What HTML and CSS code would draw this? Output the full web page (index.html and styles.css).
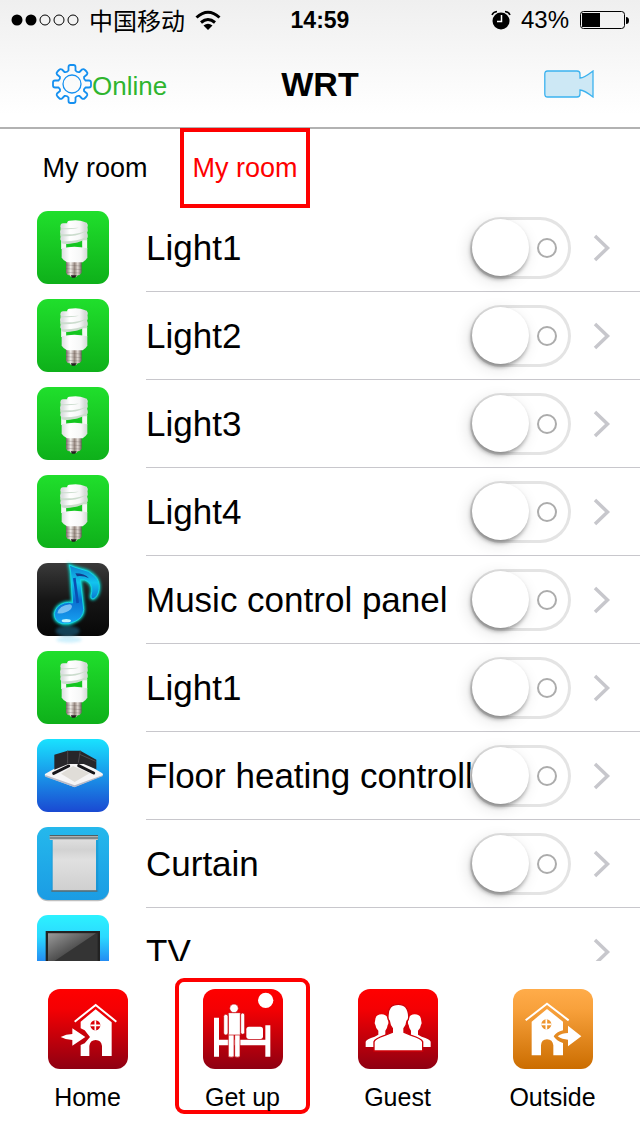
FILE: index.html
```html
<!DOCTYPE html>
<html lang="en">
<head>
    <meta charset="UTF-8">
    <meta name="viewport" content="width=device-width, initial-scale=1.0">
    <title>WRT</title>
    <link rel="stylesheet" href="styles.css">
</head>
<body>
    <!-- shared icons -->
    <svg class="sprites" width="0" height="0" aria-hidden="true">
        <defs>
            <linearGradient id="green" x2="0" y2="1"><stop offset="0" stop-color="#20df2c"/><stop offset="1" stop-color="#0eb01a"/></linearGradient>
            <linearGradient id="black" x2="0" y2="1"><stop offset="0" stop-color="#3a3a3a"/><stop offset=".5" stop-color="#161616"/><stop offset="1" stop-color="#070707"/></linearGradient>
            <linearGradient id="blue" x2="0" y2="1"><stop offset="0" stop-color="#19e2ff"/><stop offset="1" stop-color="#1a49d2"/></linearGradient>
            <linearGradient id="sky" x2="0" y2="1"><stop offset="0" stop-color="#25b8ec"/><stop offset="1" stop-color="#1b9ce4"/></linearGradient>
            <linearGradient id="tvblue" x2="0" y2="1"><stop offset="0" stop-color="#2cf2ff"/><stop offset=".3" stop-color="#2bd9ff"/><stop offset=".65" stop-color="#2488f2"/><stop offset="1" stop-color="#1a49d2"/></linearGradient>
            <linearGradient id="metal"><stop offset="0" stop-color="#766a64"/><stop offset=".3" stop-color="#f3efeb"/><stop offset=".55" stop-color="#95877f"/><stop offset=".75" stop-color="#e2dad4"/><stop offset="1" stop-color="#6b605b"/></linearGradient>
            <linearGradient id="glass"><stop offset="0" stop-color="#dcdfe0"/><stop offset=".3" stop-color="#fff"/><stop offset=".75" stop-color="#f6f7f7"/><stop offset="1" stop-color="#d3d8d6"/></linearGradient>
            <linearGradient id="note" x2="0" y2="1"><stop offset="0" stop-color="#0f7fd0"/><stop offset=".3" stop-color="#12c4ee"/><stop offset=".6" stop-color="#0a6fd0"/><stop offset="1" stop-color="#18a5f4"/></linearGradient>
            <linearGradient id="sheet" x2="0" y2="1"><stop offset="0" stop-color="#dedede"/><stop offset=".2" stop-color="#d2d2d2"/><stop offset=".4" stop-color="#e0e0e0"/><stop offset="1" stop-color="#cfcfcf"/></linearGradient>
            <linearGradient id="screen" x2=".6" y2=".7"><stop offset="0" stop-color="#9a9a9a"/><stop offset="1" stop-color="#3a3a3a"/></linearGradient>
            <linearGradient id="red" x2="0" y2="1"><stop offset="0" stop-color="#ff0000"/><stop offset=".25" stop-color="#f40003"/><stop offset="1" stop-color="#8e0012"/></linearGradient>
            <linearGradient id="orange" x2="0" y2="1"><stop offset="0" stop-color="#ffac4a"/><stop offset=".25" stop-color="#f8a13c"/><stop offset="1" stop-color="#cb6d00"/></linearGradient>
            <filter id="glow" x="-30%" y="-30%" width="160%" height="160%"><feGaussianBlur stdDeviation="5"/></filter>
        </defs>
        <symbol id="bulb" viewBox="0 0 216 219">
            <rect width="216" height="219" rx="33" fill="url(#green)"/>
            <path d="M87 150h47v35q-4 8-12 8l-4 5h-16l-4-5q-8 0-11-8z" fill="url(#metal)"/>
            <path d="M87 162l47 3M87 173l47 3M90 184l41 2" stroke="#5d514c" stroke-width="1.500" opacity=".5"/>
            <path d="M101 193h18l-5 7h-9z" fill="#252020"/>
            <path d="M80 84v30M143 84v30" stroke="#f3f6f4" stroke-width="15"/>
            <path d="M77 44v44M144 44v44" stroke="#c9dacb" stroke-width="13"/>
            <path d="M80 50q36 6 64-6M78 70q36 4 66-12M80 90q34 4 64-14" fill="none" stroke="#cbdccd" stroke-width="16" stroke-linecap="round"/>
            <path d="M78 44q30 0 66-3M77 62q36 3 67-10M78 83q36 2 66-12M98 37q26-4 42 3" fill="none" stroke="url(#glass)" stroke-width="15" stroke-linecap="round"/>
            <path d="M88 105q10-8 26-8 18 0 22 9z" fill="#12c51e"/>
            <path d="M74 112q38-9 77 0v28q-4 7-14 14H90q-12-7-16-14z" fill="url(#glass)"/>
        </symbol>
        <symbol id="chevron" viewBox="0 0 18 28">
            <path d="M2 2l12.500 12L2 26" fill="none" stroke="#c7c7cc" stroke-width="3.500"/>
        </symbol>
    </svg>

    <header class="header">
        <div class="status">
            <div class="carrier">
                <svg width="68" height="12" viewBox="0 0 68 12">
                    <circle cx="6" cy="6" r="5.500"/><circle cx="20" cy="6" r="5.500"/>
                    <g fill="none" stroke="#000"><circle cx="34" cy="6" r="5"/><circle cx="48" cy="6" r="5"/><circle cx="62" cy="6" r="5"/></g>
                </svg>
                <span>中国移动</span>
                <svg width="26" height="20" viewBox="0 0 26 20">
                    <g fill="none" stroke="#000" stroke-width="3"><path d="M1.500 7.500Q13-3 24.500 7.500"/><path d="M6 12.500q7-6 14 0"/></g>
                    <path d="M8.500 15.500q4.500-3.500 9 0L13 20z"/>
                </svg>
            </div>
            <time class="clock">14:59</time>
            <div class="power">
                <svg width="20" height="20" viewBox="0 0 20 20">
                    <circle cx="10" cy="11" r="8.500"/>
                    <path d="M1 5q1-3 5-3.500M19 5q-1-3-5-3.500" fill="none" stroke="#000" stroke-width="1.500"/>
                    <path d="M10.500 5v6.500H6" fill="none" stroke="#fff" stroke-width="1.500"/>
                </svg>
                <span>43%</span>
                <svg width="50" height="20" viewBox="0 0 50 20">
                    <rect x="1.500" y="1.500" width="44" height="17" rx="3" fill="none" stroke="#000"/>
                    <path d="M3 3h18v14H3zM47 7q3 0 3 3.500t-3 3.500z"/>
                </svg>
            </div>
        </div>
        <div class="titlebar">
            <button class="online" type="button">
                <svg width="40" height="40" viewBox="0 0 40 40" fill="none" stroke="#1590f0" stroke-width="1.800" stroke-linejoin="round">
                    <circle cx="20" cy="20" r="9" stroke-width="1.300"/>
                    <path d="M16.500 6.500V3q0-2 2-2h3q2 0 2 2v3.500q1.500 2 4 1.500l2.500-2.500q1.500-1 3 .5l1.500 1.500q1.500 1.500.5 3L32 13q-.5 2 1.500 3.500H37q2 0 2 2v3q0 2-2 2h-3.500q-2 1.500-1.500 3.500l3 2.500q1 1.500-.5 3L33 34q-1.500 1.500-3 .5L27.500 32q-2.500-.5-4 1.500V37q0 2-2 2h-3q-2 0-2-2v-3.500q-1.500-2-4-1.500L10 34.500q-1.500 1-3-.5l-1.500-1.500q-1.500-1.500-.5-3L8 27q.5-2-1.500-3.500H3q-2 0-2-2v-3q0-2 2-2h3.500Q8.500 15 8 13l-3-2.500q-1-1.500.5-3L7 6q1.500-1.500 3-.5L12.500 8q2.500.5 4-1.500z"/>
                </svg>
                <span>Online</span>
            </button>
            <h1>WRT</h1>
            <button class="camera" type="button" aria-label="Camera">
                <svg width="50" height="28" viewBox="0 0 50 28">
                    <path d="M3.500 1H33q3 0 3 3v4q4 0 13-7v26q-9-7-13-7v4q0 3-3 3H3.500Q.8 27 .8 24V4q0-3 2.700-3z" fill="#cde8f5" stroke="#3bb2ef" stroke-width="1.300"/>
                </svg>
            </button>
        </div>
    </header>

    <nav class="rooms">
        <button class="room" type="button">My room</button>
        <button class="room active" type="button">My room</button>
    </nav>

    <ul class="devices">
        <li class="device">
            <svg class="icon"><use href="#bulb"/></svg>
            <div class="info">
                <label for="d1">Light1</label>
                <input class="switch" type="checkbox" id="d1">
                <button class="more" type="button" aria-label="Open"><svg width="18" height="28"><use href="#chevron"/></svg></button>
            </div>
        </li>
        <li class="device">
            <svg class="icon"><use href="#bulb"/></svg>
            <div class="info">
                <label for="d2">Light2</label>
                <input class="switch" type="checkbox" id="d2">
                <button class="more" type="button" aria-label="Open"><svg width="18" height="28"><use href="#chevron"/></svg></button>
            </div>
        </li>
        <li class="device">
            <svg class="icon"><use href="#bulb"/></svg>
            <div class="info">
                <label for="d3">Light3</label>
                <input class="switch" type="checkbox" id="d3">
                <button class="more" type="button" aria-label="Open"><svg width="18" height="28"><use href="#chevron"/></svg></button>
            </div>
        </li>
        <li class="device">
            <svg class="icon"><use href="#bulb"/></svg>
            <div class="info">
                <label for="d4">Light4</label>
                <input class="switch" type="checkbox" id="d4">
                <button class="more" type="button" aria-label="Open"><svg width="18" height="28"><use href="#chevron"/></svg></button>
            </div>
        </li>
        <li class="device">
            <svg class="icon" viewBox="0 0 216 219">
                <rect width="216" height="219" rx="33" fill="url(#black)"/>
                <ellipse cx="92" cy="204" rx="36" ry="16" fill="#1c6f96" opacity=".55" filter="url(#glow)"/>
                <ellipse cx="96" cy="230" rx="38" ry="9" fill="#aee6fb" opacity=".6" filter="url(#glow)"/>
                <path d="M97 6q12 6 34 12 26 4 41 20 18 16 14 42-4 22-18 28-8 0-6-10 8-28-8-42-10-8-24-6L140 140q-2 24-24 34-20 12-40 8-24-6-24-30 4-24 30-32 14-4 25 0L101 27q-2-14-4-21z" fill="#0be3d8" stroke="#0be3d8" stroke-width="8" filter="url(#glow)"/>
                <path d="M97 6q12 6 34 12 26 4 41 20 18 16 14 42-4 22-18 28-8 0-6-10 8-28-8-42-10-8-24-6L140 140q-2 24-24 34-20 12-40 8-24-6-24-30 4-24 30-32 14-4 25 0L101 27q-2-14-4-21z" fill="url(#note)" stroke="#12d5e2" stroke-width="3"/>
                <path d="M61 151q5-24 38-27 10 3 3 14-16 15-41 13z" fill="#9ad3f8" opacity=".75"/>
                <path d="M115 31q28 0 41 15-18-9-36-6z" fill="#123c8c"/>
                <path d="M112 45l10 75" stroke="#0a4fb4" stroke-width="8"/>
                <ellipse cx="88" cy="173" rx="14" ry="5" fill="#bff4ff"/>
            </svg>
            <div class="info">
                <label for="d5">Music control panel</label>
                <input class="switch" type="checkbox" id="d5">
                <button class="more" type="button" aria-label="Open"><svg width="18" height="28"><use href="#chevron"/></svg></button>
            </div>
        </li>
        <li class="device">
            <svg class="icon"><use href="#bulb"/></svg>
            <div class="info">
                <label for="d6">Light1</label>
                <input class="switch" type="checkbox" id="d6">
                <button class="more" type="button" aria-label="Open"><svg width="18" height="28"><use href="#chevron"/></svg></button>
            </div>
        </li>
        <li class="device">
            <svg class="icon" viewBox="0 0 216 219">
                <rect width="216" height="219" rx="33" fill="url(#blue)"/>
                <path d="M25 104l62-34h52l57 33q4 4 0 7l-84 34-87-32q-4-4 0-8z" fill="#f6f5f6"/>
                <path d="M25 108l88 31 85-31v3l-85 34-88-32z" fill="#b9bbc9"/>
                <path d="M52 47l40-12h38l48 27v29l-38-16H94L52 92z" fill="#27262a"/>
                <path d="M92 35v38M130 35l-6 36M126 45l50 22" stroke="#4c494c" stroke-width="3"/>
                <path d="M72 104l36-23 50 22-45 26z" fill="#e0ddd8"/>
                <path d="M50 103l45-22M125 80l45 22" stroke="#17161a" stroke-width="9" stroke-linecap="round"/>
            </svg>
            <div class="info">
                <label for="d7">Floor heating controll</label>
                <input class="switch" type="checkbox" id="d7">
                <button class="more" type="button" aria-label="Open"><svg width="18" height="28"><use href="#chevron"/></svg></button>
            </div>
        </li>
        <li class="device">
            <svg class="icon" viewBox="0 0 216 219">
                <rect y="4" width="216" height="219" rx="33" fill="#000" opacity=".25"/>
                <rect width="216" height="219" rx="33" fill="url(#sky)"/>
                <path d="M44 30h140v164H44z" fill="#0d6fa8" opacity=".25"/>
                <path d="M47 38h130v153H47z" fill="url(#sheet)"/>
                <rect x="38" y="24" width="145" height="15" rx="2" fill="#c4c4c4"/>
                <path d="M38 26h145M38 33h145" stroke="#3c4c50" stroke-width="3"/>
                <path d="M43 192h138" stroke="#5c6c72" stroke-width="5"/>
            </svg>
            <div class="info">
                <label for="d8">Curtain</label>
                <input class="switch" type="checkbox" id="d8">
                <button class="more" type="button" aria-label="Open"><svg width="18" height="28"><use href="#chevron"/></svg></button>
            </div>
        </li>
        <li class="device">
            <svg class="icon" viewBox="0 0 216 219">
                <rect width="216" height="219" rx="33" fill="url(#tvblue)"/>
                <rect x="26" y="48" width="163" height="110" fill="#222"/>
                <path d="M33 55h149v96H33z" fill="#343434"/>
                <path d="M33 55h144L33 151z" fill="url(#screen)"/>
                <path d="M80 158h56v14H80z" fill="#222"/>
            </svg>
            <div class="info">
                <span class="name">TV</span>
                <button class="more" type="button" aria-label="Open"><svg width="18" height="28"><use href="#chevron"/></svg></button>
            </div>
        </li>
    </ul>

    <nav class="scenes">
        <button class="scene" type="button">
            <svg width="80" height="80" viewBox="0 0 240 240">
                <rect width="240" height="240" rx="36" fill="url(#red)"/>
                <path d="M80 98l63-50 62 50" fill="none" stroke="#fff" stroke-width="6"/>
                <path fill="#fff" fill-rule="evenodd" d="M98 98l45-37 48 39v101h-29v-30q-2-18-19-18t-19 18v30H98v-33l12-5 16-19-16-20-12-6zM142 94a15 15 0 1 0 .1 0z"/>
                <path d="M142 94v30M127 109h30" stroke="#fff" stroke-width="5"/>
                <path d="M38 144q16-9 35-9v-17l39 26-39 26v-17q-19 0-35-9z" fill="#fff"/>
            </svg>
            <span>Home</span>
        </button>
        <button class="scene active" type="button">
            <svg width="80" height="80" viewBox="0 0 240 240">
                <rect width="240" height="240" rx="36" fill="url(#red)"/>
                <g fill="#fff">
                    <circle cx="188" cy="34" r="23"/>
                    <path d="M33 86h15v66h139v-43h15v94h-15v-34H48v34H33z"/>
                    <rect x="130" y="113" width="50" height="37" rx="8"/>
                </g>
                <g fill="#fff" stroke="#c60008" stroke-width="2">
                    <path d="M76 134h17v69q-8 3-17 0zM95 134h16v69q-8 3-16 0z"/>
                    <rect x="76" y="71" width="36" height="67" rx="2"/>
                    <rect x="62" y="76" width="13" height="62" rx="6"/>
                    <rect x="113" y="72" width="12" height="64" rx="6"/>
                    <circle cx="93" cy="58" r="13"/>
                </g>
            </svg>
            <span>Get up</span>
        </button>
        <button class="scene" type="button">
            <svg width="80" height="80" viewBox="0 0 240 240">
                <rect width="240" height="240" rx="36" fill="url(#red)"/>
                <g fill="#fff">
                    <path id="side" d="M23 174v-16q2-7 27-15l11-6v-12q-8-8-9-18-3-3-1-10 0-21 20-21 18 0 20 21 1 8-2 11-1 10-7 17v49z"/>
                    <use href="#side" transform="matrix(-1 0 0 1 241 0)"/>
                    <path d="M48 186v-28q3-9 32-19l23-9v-12q-8-9-9-22-5-4-4-14-1-36 31-36 30 0 31 36 1 10-5 14-1 13-9 22v12l22 9q31 10 34 19v28z" stroke="#cf0008" stroke-width="4"/>
                </g>
            </svg>
            <span>Guest</span>
        </button>
        <button class="scene" type="button">
            <svg width="80" height="80" viewBox="0 0 240 240">
                <rect width="240" height="240" rx="36" fill="url(#orange)"/>
                <path d="M38 94l64-50 65 50" fill="none" stroke="#fff" stroke-width="6"/>
                <path fill="#fff" fill-rule="evenodd" d="M56 98l46-38 48 38v26q-20 5-28 18 8 14 28 20v37h-29v-30q-2-18-19-18t-18 18v30H56zM100 91a15 15 0 1 0 .1 0z"/>
                <path d="M100 91v30M85 106h30" stroke="#fff" stroke-width="5"/>
                <path d="M134 142q14-10 31-10v-22l40 32-40 30v-20q-17 0-31-10z" fill="#fff"/>
            </svg>
            <span>Outside</span>
        </button>
    </nav>
</body>
</html>
```
FILE: styles.css
```css
* {
    box-sizing: border-box;
}

body {
    margin: 0;
    height: 100vh;
    display: flex;
    flex-direction: column;
    font-family: "Liberation Sans", Arial, sans-serif;
    background: #fff;
    color: #000;
}

button {
    font: inherit;
    color: inherit;
    background: none;
    border: none;
    padding: 0;
    cursor: pointer;
}

svg {
    display: block;
    flex: none;
}

.sprites {
    position: absolute;
}

/* header */
.header {
    flex: none;
    background: linear-gradient(#efefef, #fff 90%);
    border-bottom: 2px solid #b2b2b2;
}

.status {
    display: grid;
    grid-template-columns: 1fr auto 1fr;
    align-items: center;
    height: 40px;
    padding: 0 11px;
    font-size: 24px;
    line-height: 40px;
}

.carrier,
.power {
    display: flex;
    align-items: center;
    gap: 10px;
}

.carrier span {
    font-family: "Noto Sans CJK SC", sans-serif;
}

.power {
    justify-content: flex-end;
}

.clock {
    font-size: 23px;
    font-weight: bold;
}

.titlebar {
    display: grid;
    grid-template-columns: 1fr auto 1fr;
    align-items: center;
    height: 87px;
    padding: 0 46px;
}

.titlebar h1 {
    margin: 0;
    font-size: 34px;
    line-height: 40px;
}

.online {
    display: flex;
    align-items: center;
    justify-self: start;
    padding-left: 6px;
    font-size: 26px;
    color: #2fb52f;
}

.online span {
    padding-top: 6px;
}

.camera {
    justify-self: end;
}

/* rooms */
.rooms {
    position: relative;
    display: flex;
    flex: none;
    gap: 20px;
    margin-top: -1px;
    padding: 0 30px;
}

.room {
    width: 130px;
    height: 80px;
    border: 4px solid transparent;
    font-size: 27px;
    white-space: nowrap;
}

.room.active {
    border-color: #fe0000;
    color: #fe0000;
}

/* devices */
.devices {
    flex: 1;
    min-height: 0;
    margin: -4px 0 0;
    padding: 0;
    list-style: none;
    overflow-y: auto;
    scrollbar-width: none;
}

.device {
    display: flex;
    gap: 37px;
    height: 88px;
    padding-left: 37px;
}

.icon {
    width: 72px;
    height: 73px;
    margin-top: 7px;
    overflow: visible;
}

.info {
    display: flex;
    flex: 1;
    align-items: center;
    min-width: 0;
    padding-right: 29px;
    border-bottom: 1px solid #c8c7cc;
}

.info label,
.name {
    flex: 1;
    min-width: 0;
    font-size: 35px;
    white-space: nowrap;
}

.switch {
    appearance: none;
    display: flex;
    flex: none;
    align-items: center;
    justify-content: space-between;
    width: 101px;
    height: 62px;
    margin: 0 22px 0 0;
    padding: 0 14px 0 2px;
    border-radius: 31px;
    background: #fff;
    box-shadow: inset 0 0 0 3px #e4e4e4;
    cursor: pointer;
}

.switch::before {
    content: "";
    width: 57px;
    height: 57px;
    border-radius: 50%;
    background: #fff;
    box-shadow: -1px 3px 4px rgba(0, 0, 0, 0.35), -3px 4px 16px rgba(0, 0, 0, 0.12);
}

.switch::after {
    content: "";
    width: 16px;
    height: 16px;
    border: 2px solid #acacac;
    border-radius: 50%;
}

.switch:checked {
    flex-direction: row-reverse;
    padding: 0 2px 0 14px;
    background: #4cd964;
}

/* scenes */
.scenes {
    display: grid;
    grid-template-columns: repeat(4, 1fr);
    flex: none;
    gap: 20px;
    padding: 17px 20px 22px;
}

.scene {
    display: flex;
    flex-direction: column;
    align-items: center;
    gap: 12px;
    height: 136px;
    padding-top: 7px;
    border: 4px solid transparent;
    border-radius: 9px;
    font-size: 25px;
    line-height: 32px;
}

.scene.active {
    border-color: #fe0000;
}
```
